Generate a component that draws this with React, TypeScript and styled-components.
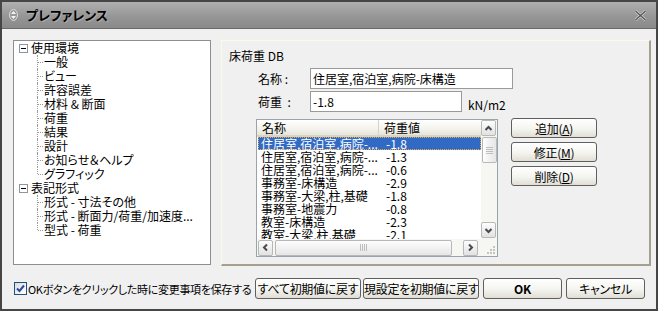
import React from "react";
import styled, { createGlobalStyle } from "styled-components";

const GlobalStyle = createGlobalStyle`
  html, body {
    margin: 0;
    padding: 0;
    background: #3a3a3a;
  }
  body {
    font-family: "Noto Sans CJK JP", "Noto Sans", sans-serif;
    font-size: 12px;
    color: #000;
  }
  * {
    box-sizing: border-box;
  }
`;

const Window = styled.div`
  width: 658px;
  height: 311px;
  border: 2px solid #464646;
  display: flex;
  flex-direction: column;
  background: #f0f0f0;
  font-feature-settings: "palt";
`;

const TitleBar = styled.div`
  height: 27px;
  flex: none;
  display: flex;
  align-items: center;
  gap: 8px;
  padding: 0 9px 0 7px;
  background: linear-gradient(#b0b0b0, #969696 55%, #8a8a8a);
  border-bottom: 1px solid #6a6a6a;
`;

const TitleText = styled.span`
  flex: 1;
  font-size: 13px;
  font-weight: 700;
  line-height: 16px;
  text-shadow: 1px 1px 0 rgba(255, 255, 255, 0.25);
`;

const Body = styled.div`
  flex: 1;
  display: flex;
  flex-direction: column;
  gap: 12px;
  padding: 11px 5px 10px 11px;
`;

const Main = styled.div`
  height: 226px;
  display: flex;
  gap: 10px;
`;

/* ---- tree ---- */

const Tree = styled.div`
  width: 198px;
  height: 225px;
  background: #fff;
  border: 1px solid #8f8f8f;
  padding-left: 5px;
  line-height: 14px;
`;

const RootRow = styled.div`
  height: 14px;
  display: flex;
  align-items: center;
  gap: 3px;
  white-space: nowrap;
`;

const Expander = styled.span`
  width: 9px;
  height: 9px;
  flex: none;
  border: 1px solid #8c96a0;
  background: #fff;
  display: flex;
  align-items: center;
  justify-content: center;
  &::after {
    content: "";
    width: 5px;
    height: 1px;
    background: #000;
  }
`;

const ChildRow = styled.div`
  position: relative;
  height: 14px;
  padding-left: 25px;
  white-space: nowrap;
  &::before {
    content: "";
    position: absolute;
    left: 18px;
    top: 0;
    bottom: 0;
    border-left: 1px dotted #9a9a9a;
  }
  &::after {
    content: "";
    position: absolute;
    left: 19px;
    top: 7px;
    width: 5px;
    border-top: 1px dotted #9a9a9a;
  }
  &:last-child::before {
    bottom: 7px;
  }
`;

/* ---- right panel ---- */

const Group = styled.div`
  flex: 1;
  border-top: 1px solid #fdf9ea;
  border-left: 1px solid #fdf9ea;
  border-right: 2px solid #a5a08e;
  border-bottom: 2px solid #a5a08e;
  padding: 8px 0 0 7px;
`;

const GroupTitle = styled.div`
  line-height: 14px;
`;

const Form = styled.div`
  margin: 5px 0 0 27px;
  display: flex;
  flex-direction: column;
  gap: 2px;
`;

const FieldRow = styled.div`
  display: flex;
  align-items: center;
`;

const FieldLabel = styled.span`
  width: 54px;
  padding-left: 2px;
  white-space: pre;
`;

const TextInput = styled.div<{ $w: number }>`
  width: ${(p) => p.$w}px;
  height: 21px;
  border: 1px solid #9a9a9a;
  background: #fff;
  padding-left: 2px;
  line-height: 19px;
  white-space: nowrap;
`;

const Unit = styled.span`
  margin-left: 6px;
  align-self: flex-end;
  line-height: 14px;
`;

const ListArea = styled.div`
  display: flex;
  gap: 13px;
  margin-top: 5px;
`;

const ListBox = styled.div`
  width: 242px;
  height: 138px;
  border: 1px solid #9aa3ab;
  background: #fff;
  display: grid;
  grid-template-columns: 1fr 16px;
  grid-template-rows: 1fr 17px;
`;

const ListView = styled.div`
  overflow: hidden;
`;

const Header = styled.div`
  height: 17px;
  display: flex;
  background: linear-gradient(#ffffff, #f3f2ec 60%, #e6e4da);
  border-bottom: 2px solid #d8d4c4;
  line-height: 15px;
`;

const HeaderCell = styled.div<{ $w: number }>`
  width: ${(p) => p.$w}px;
  padding-left: 5px;
  border-right: 1px solid #d8d4c4;
  white-space: nowrap;
  &:last-child {
    border-right: 0;
    flex: 1;
  }
`;

const Row = styled.div<{ $selected?: boolean }>`
  height: 13px;
  margin-left: 1px;
  display: flex;
  line-height: 13px;
  white-space: nowrap;
  background: ${(p) => (p.$selected ? "#316ac5" : "transparent")};
  color: ${(p) => (p.$selected ? "#fff" : "#000")};
  outline: ${(p) => (p.$selected ? "1px dotted #e9a84c" : "none")};
  outline-offset: -1px;
`;

const Cell = styled.div<{ $w?: number }>`
  width: ${(p) => (p.$w ? `${p.$w}px` : "auto")};
  flex: none;
  padding-left: ${(p) => (p.$w ? 3 : 7)}px;
`;

const VScroll = styled.div`
  grid-row: 1;
  grid-column: 2;
  display: flex;
  flex-direction: column;
  background: #f6f6f3;
  padding-bottom: 1px;
`;

const HScroll = styled.div`
  grid-row: 2;
  grid-column: 1;
  display: flex;
  align-items: center;
  background: #f6f6f3;
  padding-right: 2px;
`;

const ScrollBtn = styled.div<{ $flush?: boolean }>`
  width: 15px;
  height: 16px;
  flex: none;
  margin: ${(p) => (p.$flush ? "0" : "0 1px")};
  border: 1px solid #b8b8b8;
  border-radius: 2px;
  background: linear-gradient(#fdfdfd, #e2e2e2);
  display: flex;
  align-items: center;
  justify-content: center;
`;

const Thumb = styled.div<{ $vertical?: boolean }>`
  ${(p) =>
    p.$vertical
      ? "width: 15px; height: 26px; margin: 1px 0 0 1px;"
      : "height: 16px; width: 177px; margin-left: 1px;"}
  border: 1px solid #b8b8b8;
  border-radius: 2px;
  background: linear-gradient(${(p) => (p.$vertical ? "90deg," : "")} #fdfdfd, #e6e6e6);
  display: flex;
  align-items: center;
  justify-content: center;
`;

const Track = styled.div`
  flex: 1;
`;

const Grip = styled.div`
  grid-row: 2;
  grid-column: 2;
  background: #f6f6f3;
  display: flex;
  align-items: flex-end;
  justify-content: flex-end;
  padding: 0 2px 2px 0;
`;

const SideButtons = styled.div`
  display: flex;
  flex-direction: column;
  gap: 4px;
  margin-top: -1px;
`;

const PushButton = styled.button<{ $w: number; $h?: number; $bold?: boolean }>`
  width: ${(p) => p.$w}px;
  height: ${(p) => p.$h ?? 21}px;
  flex: none;
  padding: 0;
  border: 1px solid #5f5f5f;
  border-radius: 3px;
  background: linear-gradient(#ffffff, #f4f4f0 55%, #e0ded4);
  font-family: inherit;
  font-feature-settings: "palt";
  font-size: 12px;
  letter-spacing: -0.3px;
  font-weight: ${(p) => (p.$bold ? 700 : 400)};
  color: #000;
  white-space: nowrap;
  overflow: hidden;
`;

/* ---- bottom ---- */

const Footer = styled.div`
  height: 21px;
  display: flex;
  align-items: center;
  padding-left: 1px;
  padding-right: 6px;
`;

const CheckLabel = styled.label`
  flex: 1;
  min-width: 0;
  display: flex;
  align-items: center;
  gap: 1px;
  white-space: nowrap;
  font-size: 11px;
  letter-spacing: -0.3px;
`;

const CheckBox = styled.span`
  width: 13px;
  height: 13px;
  flex: none;
  border: 1px solid #1c5180;
  background: linear-gradient(135deg, #dcdcd7, #ffffff);
  display: flex;
  align-items: center;
  justify-content: center;
`;

const FooterButtons = styled.div`
  flex: none;
  display: flex;
  gap: 4px;
  & > :first-child {
    margin-right: -2px;
  }
`;

function Chevron({ dir }: { dir: "up" | "down" | "left" | "right" }) {
  const rot = { up: 0, right: 90, down: 180, left: 270 }[dir];
  return (
    <svg width="9" height="9" viewBox="0 0 9 9">
      <polyline
        points="1.5,6 4.5,3 7.5,6"
        fill="none"
        stroke="#4a4a4a"
        strokeWidth="2"
        transform={`rotate(${rot} 4.5 4.5)`}
      />
    </svg>
  );
}

const listRows: [string, string][] = [
  ["住居室,宿泊室,病院-...", "-1.8"],
  ["住居室,宿泊室,病院-...", "-1.3"],
  ["住居室,宿泊室,病院-...", "-0.6"],
  ["事務室-床構造", "-2.9"],
  ["事務室-大梁,柱,基礎", "-1.8"],
  ["事務室-地震力", "-0.8"],
  ["教室-床構造", "-2.3"],
  ["教室-大梁,柱,基礎", "-2.1"],
];

const tree = [
  {
    label: "使用環境",
    children: ["一般", "ビュー", "許容誤差", "材料 & 断面", "荷重", "結果", "設計", "お知らせ＆ヘルプ", "グラフィック"],
  },
  {
    label: "表記形式",
    children: ["形式 - 寸法その他", "形式 - 断面力/荷重/加速度...", "型式 - 荷重"],
  },
];

export default function App() {
  return (
    <>
      <GlobalStyle />
      <Window>
        <TitleBar>
          <svg width="9" height="12" viewBox="0 0 9 12">
            <ellipse cx="4.5" cy="6" rx="4" ry="5.5" fill="#9a9a9a" stroke="#d8d8d8" strokeWidth="1" />
            <path d="M2 5 L4.5 2 L7 5 Z M2 7 L4.5 10 L7 7 Z" fill="#f4f4f4" />
          </svg>
          <TitleText>プレファレンス</TitleText>
          <svg width="13" height="11" viewBox="0 0 13 11">
            <path d="M1.5 1 L11.5 10 M11.5 1 L1.5 10" stroke="#dcdcdc" strokeWidth="2.6" />
            <path d="M1.5 1 L11.5 10 M11.5 1 L1.5 10" stroke="#555" strokeWidth="1.4" />
          </svg>
        </TitleBar>
        <Body>
          <Main>
            <Tree>
              {tree.map((node) => (
                <div key={node.label}>
                  <RootRow>
                    <Expander />
                    <span>{node.label}</span>
                  </RootRow>
                  <div>
                    {node.children.map((c) => (
                      <ChildRow key={c}>{c}</ChildRow>
                    ))}
                  </div>
                </div>
              ))}
            </Tree>
            <Group>
              <GroupTitle>床荷重 DB</GroupTitle>
              <Form>
                <FieldRow>
                  <FieldLabel>{"名称 :"}</FieldLabel>
                  <TextInput $w={203}>住居室,宿泊室,病院-床構造</TextInput>
                </FieldRow>
                <FieldRow>
                  <FieldLabel>{"荷重  :"}</FieldLabel>
                  <TextInput $w={152}>-1.8</TextInput>
                  <Unit>kN/m2</Unit>
                </FieldRow>
                <ListArea>
                  <ListBox>
                    <ListView>
                      <Header>
                        <HeaderCell $w={122}>名称</HeaderCell>
                        <HeaderCell $w={0}>荷重値</HeaderCell>
                      </Header>
                      {listRows.map(([name, val], i) => (
                        <Row key={i} $selected={i === 0}>
                          <Cell $w={121}>{name}</Cell>
                          <Cell>{val}</Cell>
                        </Row>
                      ))}
                    </ListView>
                    <VScroll>
                      <ScrollBtn $flush>
                        <Chevron dir="up" />
                      </ScrollBtn>
                      <Thumb $vertical>
                        <svg width="7" height="7" viewBox="0 0 7 7">
                          <path d="M0 0.5H7M0 2.5H7M0 4.5H7M0 6.5H7" stroke="#bdbdbd" />
                        </svg>
                      </Thumb>
                      <Track />
                      <ScrollBtn $flush>
                        <Chevron dir="down" />
                      </ScrollBtn>
                    </VScroll>
                    <HScroll>
                      <ScrollBtn>
                        <Chevron dir="left" />
                      </ScrollBtn>
                      <Thumb>
                        <svg width="7" height="7" viewBox="0 0 7 7">
                          <path d="M0.5 0V7M2.5 0V7M4.5 0V7M6.5 0V7" stroke="#bdbdbd" />
                        </svg>
                      </Thumb>
                      <Track />
                      <ScrollBtn>
                        <Chevron dir="right" />
                      </ScrollBtn>
                    </HScroll>
                    <Grip>
                      <svg width="10" height="10" viewBox="0 0 10 10">
                        <g fill="#c4c4c4">
                          <rect x="8" y="2" width="2" height="2" />
                          <rect x="5" y="5" width="2" height="2" />
                          <rect x="8" y="5" width="2" height="2" />
                          <rect x="2" y="8" width="2" height="2" />
                          <rect x="5" y="8" width="2" height="2" />
                          <rect x="8" y="8" width="2" height="2" />
                        </g>
                      </svg>
                    </Grip>
                  </ListBox>
                  <SideButtons>
                    <PushButton $w={86} $h={20}>
                      追加(<u>A</u>)
                    </PushButton>
                    <PushButton $w={86} $h={20}>
                      修正(<u>M</u>)
                    </PushButton>
                    <PushButton $w={86} $h={20}>
                      削除(<u>D</u>)
                    </PushButton>
                  </SideButtons>
                </ListArea>
              </Form>
            </Group>
          </Main>
          <Footer>
            <CheckLabel>
              <CheckBox>
                <svg width="9" height="9" viewBox="0 0 9 9">
                  <path d="M1 4.5 L3.5 7 L8 1.5" fill="none" stroke="#2b48a8" strokeWidth="2" />
                </svg>
              </CheckBox>
              <span>OKボタンをクリックした時に変更事項を保存する</span>
            </CheckLabel>
            <FooterButtons>
              <PushButton $w={106}>すべて初期値に戻す</PushButton>
              <PushButton $w={116}>現設定を初期値に戻す</PushButton>
              <PushButton $w={79} $bold>
                OK
              </PushButton>
              <PushButton $w={79}>キャンセル</PushButton>
            </FooterButtons>
          </Footer>
        </Body>
      </Window>
    </>
  );
}
